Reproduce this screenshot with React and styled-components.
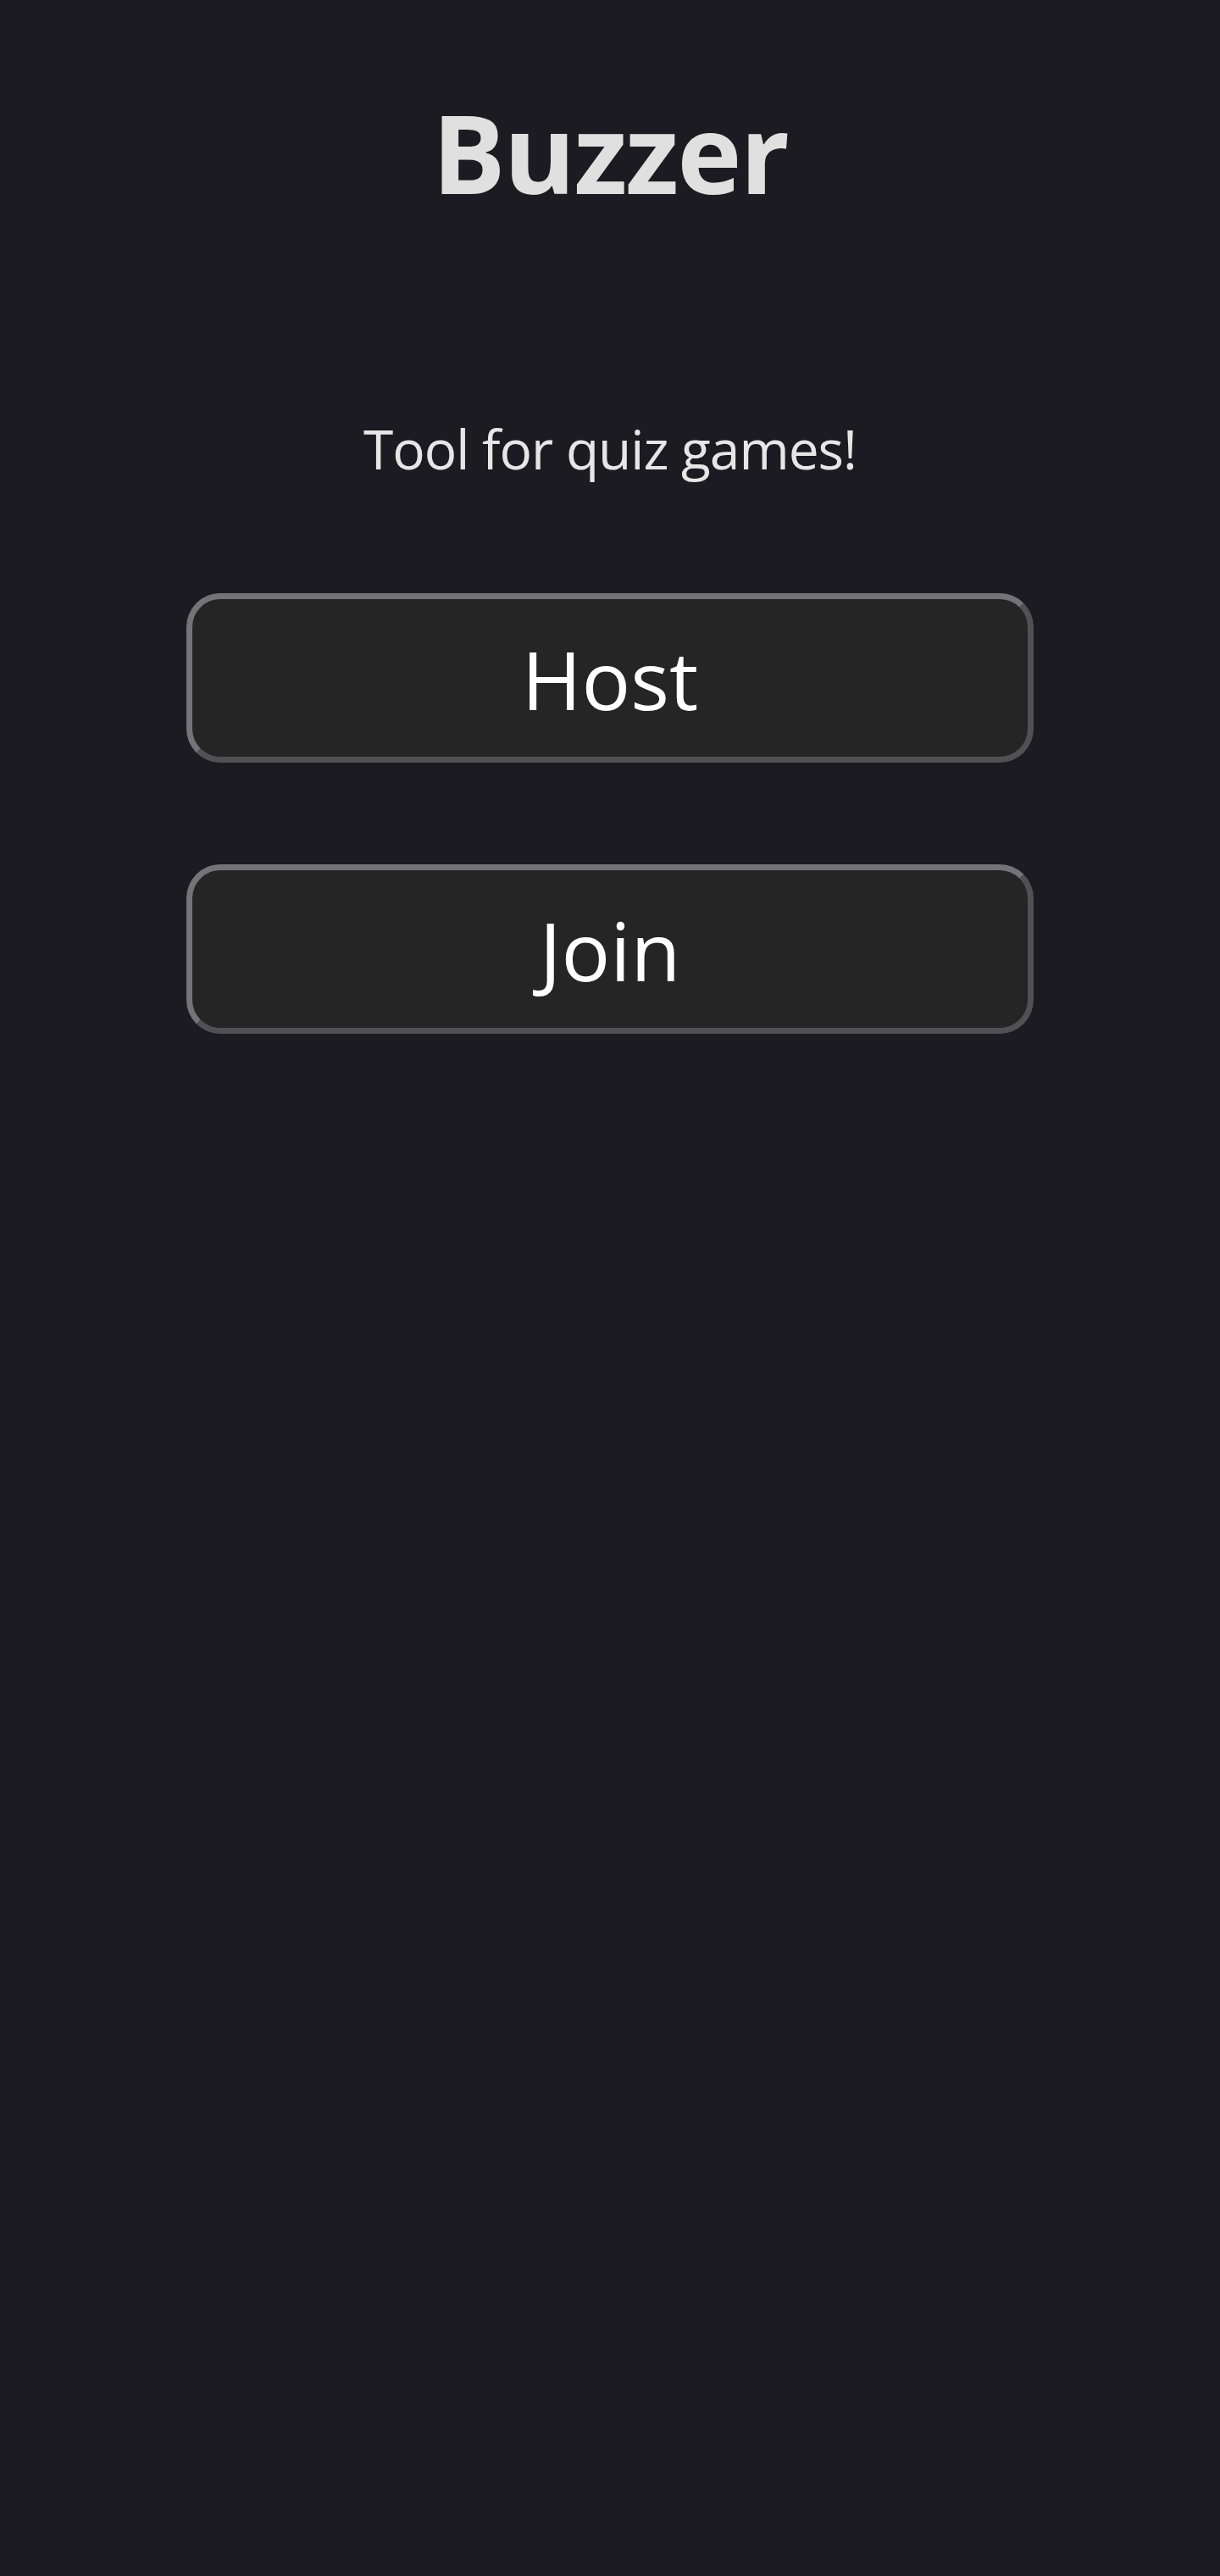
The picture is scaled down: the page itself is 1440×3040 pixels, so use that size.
import React from 'react';
import styled, { createGlobalStyle } from 'styled-components';

const GlobalStyle = createGlobalStyle`
  html, body {
    margin: 0;
    padding: 0;
    background-color: #1c1b21;
  }
  body {
    min-height: 3040px;
    font-family: "Open Sans", "Noto Sans", sans-serif;
  }
`;

const Page = styled.main`
  display: flex;
  flex-direction: column;
  align-items: center;
  padding-top: 94px;
`;

const Title = styled.h1`
  margin: 0;
  font-size: 129px;
  line-height: 170px;
  font-weight: 700;
  color: #e0e0e0;
  letter-spacing: -2px;
`;

const Subtitle = styled.p`
  margin: 226px 0 0;
  font-size: 64px;
  line-height: 80px;
  font-weight: 400;
  color: #e6e6e6;
  letter-spacing: -1px;
`;

const Menu = styled.div`
  display: flex;
  flex-direction: column;
  gap: 120px;
  margin-top: 130px;
  width: 1000px;
`;

const MenuButton = styled.button`
  box-sizing: border-box;
  height: 200px;
  width: 100%;
  background-color: #252525;
  border: 7px solid;
  border-color: #747378 #505055 #505055 #747378;
  border-radius: 40px;
  color: #ffffff;
  font-family: "Open Sans", "Noto Sans", sans-serif;
  font-size: 96px;
  font-weight: 400;
  cursor: pointer;
`;

export default function App() {
  return (
    <>
      <GlobalStyle />
      <Page>
        <Title>Buzzer</Title>
        <Subtitle>Tool for quiz games!</Subtitle>
        <Menu>
          <MenuButton>Host</MenuButton>
          <MenuButton>Join</MenuButton>
        </Menu>
      </Page>
    </>
  );
}
